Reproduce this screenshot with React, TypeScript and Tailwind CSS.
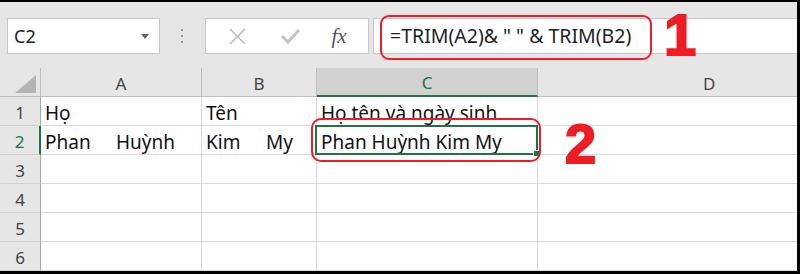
import React from 'react';

const font = { fontFamily: '"Noto Sans", "Open Sans", sans-serif' };

function Toolbar() {
  return (
    <div className="flex h-[66px] items-start bg-[#e6e6e6] pl-[7px] pt-[16px]">
      {/* Name box */}
      <div className="flex h-[36px] w-[153px] items-center justify-between border border-[#c6c6c6] bg-white pl-[6px] pr-[10px]">
        <span className="text-[18px] leading-none text-[#222]">C2</span>
        <svg width="8" height="5" viewBox="0 0 8 5">
          <path d="M0 0 L8 0 L4 5 Z" fill="#666" />
        </svg>
      </div>
      {/* Separator dots */}
      <div className="flex h-[36px] w-[45px] flex-col items-center justify-center gap-[4px] pr-[2px]">
        <span className="h-[2px] w-[2px] bg-[#999]" />
        <span className="h-[2px] w-[2px] bg-[#999]" />
        <span className="h-[2px] w-[2px] bg-[#999]" />
      </div>
      {/* Cancel / Enter / fx */}
      <div className="flex h-[36px] w-[164px] items-center border border-[#c6c6c6] bg-white">
        <div className="flex w-[58px] justify-center pl-[4px]">
          <svg width="19" height="19" viewBox="0 0 19 19">
            <path d="M2 2 L17 17 M17 2 L2 17" stroke="#bdbdbd" strokeWidth="1.6" />
          </svg>
        </div>
        <div className="flex w-[52px] justify-center">
          <svg width="21" height="17" viewBox="0 0 21 17">
            <path d="M2 8 L8 14 L19 2" stroke="#c4c4c4" strokeWidth="3" fill="none" />
          </svg>
        </div>
        <div className="flex flex-1 justify-center pr-[6px]">
          <span
            className="text-[21px] italic leading-none text-[#555]"
            style={{ fontFamily: '"Liberation Serif", serif' }}
          >
            fx
          </span>
        </div>
      </div>
      {/* Formula bar */}
      <div className="ml-[4px] flex h-[36px] flex-1 items-center border-y border-l border-[#c6c6c6] bg-white pl-[16px]">
        <span className="text-[19.5px] leading-none text-[#222] whitespace-pre">=TRIM(A2)&amp; " " &amp; TRIM(B2)</span>
      </div>
    </div>
  );
}

const rows = [1, 2, 3, 4, 5, 6];

function Sheet() {
  const hdr = 'flex h-[29px] items-end justify-center border-b border-r text-[17px] leading-[24px]';
  const cell = 'flex h-[29px] items-end border-b border-r border-[#dadada] bg-white pl-[4px] text-[19px] leading-[24px] text-[#111] whitespace-nowrap';
  return (
    <div className="grid grid-cols-[41px_161px_115px_221px_1fr]">
      {/* header row */}
      <div className="relative h-[29px] border-b border-r border-[#bdbdbd] bg-[#e6e6e6]">
        <svg className="absolute left-[15px] top-[7px]" width="21" height="18" viewBox="0 0 21 18">
          <path d="M21 0 L21 18 L0 18 Z" fill="#b4b4b4" />
        </svg>
      </div>
      <div className={`${hdr} border-[#bdbdbd] bg-[#e6e6e6] text-[#444]`}>A</div>
      <div className={`${hdr} border-[#bdbdbd] bg-[#e6e6e6] text-[#444]`}>B</div>
      <div className={`${hdr} border-b-2 border-r-[#bdbdbd] border-b-[#217346] bg-[#d2d2d2] text-[#217346]`}>C</div>
      <div className="flex h-[29px] items-end border-b border-[#bdbdbd] bg-[#e6e6e6] pl-[165px] text-[17px] leading-[24px] text-[#444]">D</div>

      {rows.map((r) => (
        <React.Fragment key={r}>
          <div
            className={`${hdr} bg-[#e6e6e6] border-b-[#d0d0d0] ${
              r === 2 ? 'border-r-2 border-r-[#217346] text-[#217346]' : 'border-r-[#a8a8a8] text-[#444]'
            }`}
          >
            {r}
          </div>
          <div className={cell}>
            {r === 1 && 'Họ'}
            {r === 2 && (
              <>
                <span className="inline-block w-[71px]">Phan</span>
                <span>Huỳnh</span>
              </>
            )}
          </div>
          <div className={cell}>
            {r === 1 && 'Tên'}
            {r === 2 && (
              <>
                <span className="inline-block w-[60px]">Kim</span>
                <span>My</span>
              </>
            )}
          </div>
          <div className={`${cell} ${r === 2 ? 'relative' : ''}`}>
            {r === 1 && 'Họ tên và ngày sinh'}
            {r === 2 && (
              <>
                <span>Phan Huỳnh Kim My</span>
                <div className="pointer-events-none absolute -left-[2px] -top-[1px] bottom-[-1px] right-[-1px] border-2 border-[#217346]" />
                <div className="absolute -bottom-[3px] -right-[3px] h-[7px] w-[7px] border border-white bg-[#217346]" />
              </>
            )}
          </div>
          <div className={`${cell} border-r-0`} />
        </React.Fragment>
      ))}
    </div>
  );
}

export default function App() {
  return (
    <div className="relative h-[274px] w-[800px] overflow-hidden bg-black" style={font}>
      <div className="absolute left-0 top-[2px] h-[269px] w-[797px] overflow-hidden bg-[#e6e6e6]">
        <Toolbar />
        <Sheet />
      </div>

      {/* Red annotations */}
      <div className="absolute left-[380px] top-[15px] h-[45px] w-[272px] rounded-[9px] border-2 border-[#ee1c24]" />
      <div
        className="absolute left-[664px] top-[6px] text-[58px] font-bold leading-none text-[#ee1c24] [-webkit-text-stroke:2px_#ee1c24]"
        style={{ fontFamily: '"Liberation Sans", Arial, sans-serif' }}
      >
        1
      </div>
      <div className="absolute left-[311px] top-[118px] h-[44px] w-[230px] rounded-[10px] border-2 border-[#ee1c24]" />
      <div
        className="absolute left-[565px] top-[116px] text-[56px] font-bold leading-none text-[#ee1c24] [-webkit-text-stroke:2px_#ee1c24]"
        style={{ fontFamily: '"Liberation Sans", Arial, sans-serif' }}
      >
        2
      </div>
    </div>
  );
}
